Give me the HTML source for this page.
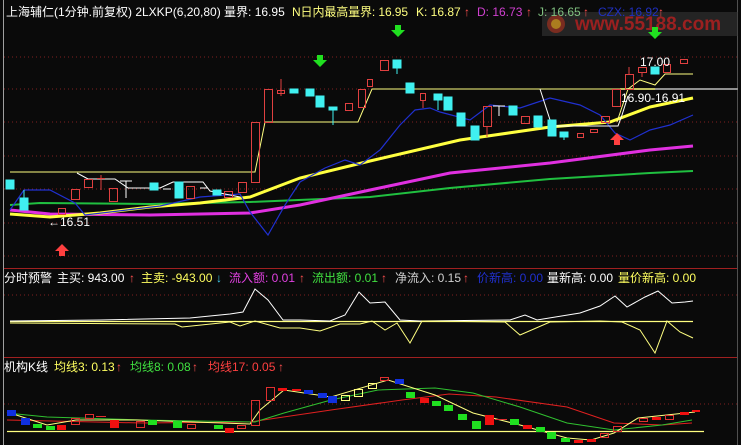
<!DOCTYPE html>
<html><head><meta charset="utf-8"><style>
html,body{margin:0;padding:0;background:#0a0a0a;width:741px;height:445px;overflow:hidden}
svg{display:block}
text{font-family:"Liberation Sans","Noto Sans CJK SC",sans-serif;font-size:12px}
</style></head><body>
<svg width="741" height="445" viewBox="0 0 741 445" xmlns="http://www.w3.org/2000/svg">
<rect width="741" height="445" fill="#0a0a0a"/>
<line x1="3.5" y1="0" x2="3.5" y2="445" stroke="#a0a0a0"/>
<line x1="737.5" y1="0" x2="737.5" y2="445" stroke="#505050"/>
<g stroke="#802020" stroke-dasharray="1,3">
<line x1="4" y1="57" x2="737" y2="57"/><line x1="4" y1="89" x2="737" y2="89"/>
<line x1="4" y1="122" x2="737" y2="122"/><line x1="4" y1="156" x2="737" y2="156"/>
<line x1="4" y1="189" x2="737" y2="189"/><line x1="4" y1="223" x2="737" y2="223"/>
<line x1="4" y1="256" x2="737" y2="256"/><line x1="4" y1="295" x2="737" y2="295"/>
<line x1="4" y1="404" x2="737" y2="404"/>
</g>
<line x1="4" y1="268.5" x2="737" y2="268.5" stroke="#a02020"/>
<line x1="4" y1="357.5" x2="737" y2="357.5" stroke="#a02020"/>

<rect x="542" y="12" width="196" height="24" fill="#3a3a3a" opacity="0.55"/>
<circle cx="556" cy="24" r="9" fill="#a03020" opacity="0.7"/>
<circle cx="556" cy="24" r="5" fill="#c0a020" opacity="0.7"/>
<text x="575" y="30" fill="#b02020" style="font-size:19px;font-weight:bold" opacity="0.85">www.55188.com</text>

<text x="6" y="16" fill="#ffffff">上海辅仁(1分钟.前复权) 2LXKP(6,20,80)  量界: 16.95</text>
<text x="292" y="16" fill="#ffff80" textLength="116">N日内最高量界: 16.95</text>
<text x="416" y="16" fill="#ffff80">K: 16.87</text><text x="464" y="16" fill="#ff5050">↑</text>
<text x="477" y="16" fill="#d040d0">D: 16.73</text><text x="526" y="16" fill="#ff5050">↑</text>
<text x="538" y="16" fill="#80c080">J: 16.65</text><text x="583" y="16" fill="#ff5050">↑</text>
<text x="598" y="16" fill="#2030c0">CZX: 16.92</text><text x="658" y="16" fill="#ff5050">↑</text>

<polyline fill="none" stroke="#20c040" stroke-width="2" points="10,205 40,203 150,204 250,202 370,197 450,188 550,179 650,173 693,171"/>
<polyline fill="none" stroke="#e030e0" stroke-width="3" points="10,210 50,214 150,215 250,213 300,205 370,190 450,173 550,163 650,150 693,146"/>
<polyline fill="none" stroke="#ffff40" stroke-width="3" points="10,214 50,217 100,213 150,207 200,203 250,197 300,178 370,161 460,140 550,127 610,122 650,107 693,98"/>
<polyline fill="none" stroke="#2030d0" stroke-width="1.2" points="10,210 24,190 50,190 75,203 85,215 160,206 200,197 240,194 250,212 268,235 285,205 300,182 325,168 345,160 360,165 380,150 400,125 415,110 430,108 440,112 470,120 490,105 520,108 550,98 580,105 600,115 615,133 630,140 650,130 670,125 693,115"/>
<polyline fill="none" stroke="#ffff80" stroke-width="1" points="10,172 255,172 265,122 330,122 358,122 372,89 620,89"/>
<line x1="620" y1="89" x2="655" y2="89" stroke="#c0c060" stroke-width="2"/>
<line x1="655" y1="89" x2="738" y2="89" stroke="#909090" stroke-width="2"/>
<polyline fill="none" stroke="#ffff80" points="617,122 628,89 640,80 655,85 665,74 693,74"/>
<polyline fill="none" stroke="#ffffff" points="77,173 88,179 115,179 128,188 160,188 173,182 203,182 210,191 240,197"/>
<polyline fill="none" stroke="#ffffff" points="540,89 552,126 618,126 622,115 628,96"/>
<line x1="200" y1="188" x2="208" y2="188" stroke="#fff"/>
<line x1="163" y1="189" x2="171" y2="189" stroke="#fff"/>
<line x1="493" y1="106" x2="505" y2="106" stroke="#fff"/><line x1="499" y1="106" x2="499" y2="116" stroke="#fff"/>
<line x1="120" y1="181" x2="132" y2="181" stroke="#fff"/><line x1="126" y1="181" x2="126" y2="198" stroke="#fff"/>

<g fill="#40f0f0" stroke="#40f0f0">
<rect x="6" y="180" width="8" height="9"/><rect x="20" y="198" width="8" height="12"/><line x1="24" y1="190" x2="24" y2="198"/>
<rect x="150" y="183" width="8" height="7"/><rect x="175" y="182" width="8" height="16"/><rect x="213" y="190" width="8" height="5"/>
<rect x="290" y="89" width="8" height="4"/><rect x="306" y="89" width="8" height="7"/><rect x="316" y="96" width="8" height="11"/>
<rect x="329" y="107" width="8" height="3"/><line x1="333" y1="110" x2="333" y2="125"/>
<rect x="393" y="60" width="8" height="8"/><line x1="397" y1="68" x2="397" y2="74"/>
<rect x="406" y="83" width="8" height="10"/><rect x="434" y="94" width="8" height="6"/><line x1="438" y1="100" x2="438" y2="110"/>
<rect x="444" y="97" width="8" height="13"/><rect x="457" y="113" width="8" height="13"/><rect x="471" y="126" width="8" height="14"/>
<rect x="509" y="106" width="8" height="9"/><rect x="534" y="116" width="8" height="11"/><rect x="548" y="120" width="8" height="16"/>
<rect x="560" y="132" width="8" height="5"/><line x1="564" y1="137" x2="564" y2="140"/><rect x="651" y="67" width="8" height="7"/>
</g>
<g fill="none" stroke="#e04040">
<rect x="58.5" y="208.5" width="7" height="6"/><rect x="71.5" y="189.5" width="8" height="10"/><rect x="84.5" y="179.5" width="8" height="8"/>
<line x1="97" y1="178.5" x2="105" y2="178.5"/><line x1="101" y1="175" x2="101" y2="190"/>
<rect x="109.5" y="188.5" width="8" height="13"/><rect x="186.5" y="186.5" width="8" height="12"/><rect x="224.5" y="191.5" width="8" height="6"/>
<rect x="238.5" y="182.5" width="8" height="10"/><rect x="251.5" y="122.5" width="8" height="60"/><rect x="264.5" y="89.5" width="8" height="33"/>
<rect x="277.5" y="90.5" width="7" height="3"/><line x1="281" y1="79" x2="281" y2="96"/>
<rect x="345.5" y="103.5" width="7" height="7"/><rect x="358.5" y="89.5" width="7" height="18"/><rect x="367.5" y="79.5" width="5" height="7"/>
<rect x="380.5" y="60.5" width="8" height="10"/><rect x="420.5" y="93.5" width="5" height="7"/><line x1="423" y1="100" x2="423" y2="108"/>
<rect x="483.5" y="106.5" width="8" height="20"/><line x1="487" y1="126" x2="487" y2="137"/>
<rect x="521.5" y="116.5" width="8" height="7"/><rect x="577.5" y="133.5" width="6" height="4"/>
<rect x="590.5" y="129.5" width="7" height="3"/><rect x="601.5" y="116.5" width="8" height="6"/>
<rect x="612.5" y="89.5" width="8" height="17"/><rect x="625.5" y="74.5" width="8" height="15"/><line x1="629" y1="67" x2="629" y2="74"/>
<rect x="638.5" y="67.5" width="8" height="5"/><line x1="642" y1="72" x2="642" y2="77"/>
<rect x="663.5" y="64.5" width="7" height="8"/><rect x="680.5" y="59.5" width="7" height="4"/>
</g>
<text x="640" y="66" fill="#ffffff">17.00</text>
<text x="621" y="102" fill="#ffffff">16.90-16.91</text>
<text x="48" y="226" fill="#ffffff">←16.51</text>
<g fill="#20e020"><path d="M317,55h6v5h4l-7,7l-7,-7h4z"/><path d="M395,25h6v5h4l-7,7l-7,-7h4z"/><path d="M652,27h6v5h4l-7,7l-7,-7h4z"/></g>
<g fill="#ff4040"><path d="M59,256h6v-5h4l-7,-7l-7,7h4z"/><path d="M614,145h6v-5h4l-7,-7l-7,7h4z"/></g>

<text x="4" y="282" fill="#ffffff">分时预警</text>
<text x="57" y="282" fill="#ffffff">主买: 943.00</text><text x="129" y="282" fill="#ff5050">↑</text>
<text x="141" y="282" fill="#ffff60">主卖: -943.00</text><text x="216" y="282" fill="#40d0f0">↓</text>
<text x="229" y="282" fill="#e040e0">流入额: 0.01</text><text x="299" y="282" fill="#ff5050">↑</text>
<text x="312" y="282" fill="#40e040">流出额: 0.01</text><text x="381" y="282" fill="#ff5050">↑</text>
<text x="395" y="282" fill="#d0d0d0">净流入: 0.15</text><text x="463" y="282" fill="#ff5050">↑</text>
<text x="477" y="282" fill="#2030d0">价新高: 0.00</text>
<text x="547" y="282" fill="#ffffff">量新高: 0.00</text>
<text x="618" y="282" fill="#ffff60">量价新高: 0.00</text>
<line x1="10" y1="321.5" x2="693" y2="321.5" stroke="#ffff80" stroke-width="1.3"/>
<polyline fill="none" stroke="#ffffff" points="10,321 100,320 190,318 230,314 243,312 255,289 268,300 283,320 300,320 330,321 345,315 359,292 370,303 385,302 400,320 420,321 510,320 525,315 537,320 580,313 600,306 615,296 627,307 645,297 658,291 672,303 685,302 693,301"/>
<polyline fill="none" stroke="#ffff80" points="10,323 175,324 182,327 230,322 240,326 255,321 280,328 300,328 320,331 340,324 360,324 372,321 385,330 397,323 410,343 422,321 505,322 520,335 550,322 600,321 622,322 640,330 655,353 667,321 680,332 693,338"/>

<text x="4" y="371" fill="#ffffff">机构K线</text>
<text x="54" y="371" fill="#ffff60">均线3: 0.13</text><text x="116" y="371" fill="#ff5050">↑</text>
<text x="130" y="371" fill="#40e040">均线8: 0.08</text><text x="192" y="371" fill="#ff5050">↑</text>
<text x="208" y="371" fill="#ff4040">均线17: 0.05</text><text x="278" y="371" fill="#ff5050">↑</text>
<line x1="7" y1="431.5" x2="704" y2="431.5" stroke="#ffff80" stroke-width="1.3"/>
<polyline fill="none" stroke="#e02020" points="7,420 142,423 250,422 331,410 402,400 449,394 496,397 567,407 614,423 662,425 692,423"/>
<polyline fill="none" stroke="#30c030" points="7,413 47,417 142,420 255,422 284,413 331,400 378,390 435,388 473,393 520,407 567,423 614,430 662,425 692,420"/>
<polyline fill="none" stroke="#ffff80" points="7,412 47,425 76,420 137,420 250,424 260,410 284,390 331,397 388,380 435,395 473,413 520,425 567,438 591,440 614,433 638,418 695,412"/>
<g fill="#1030e0"><rect x="7" y="410" width="9" height="6"/><rect x="21" y="418" width="9" height="7"/><rect x="304" y="390" width="9" height="4"/><rect x="318" y="393" width="9" height="5"/><rect x="328" y="396" width="9" height="7"/><rect x="395" y="379" width="9" height="5"/></g>
<g fill="#20e020"><rect x="33" y="424" width="9" height="4"/><rect x="46" y="426" width="9" height="4"/><rect x="148" y="420" width="9" height="5"/><rect x="173" y="421" width="9" height="7"/><rect x="214" y="425" width="9" height="4"/><rect x="406" y="392" width="9" height="6"/><rect x="432" y="401" width="9" height="5"/><rect x="444" y="405" width="9" height="6"/><rect x="458" y="414" width="9" height="6"/><rect x="472" y="421" width="9" height="8"/><rect x="510" y="419" width="9" height="6"/><rect x="536" y="427" width="9" height="5"/><rect x="547" y="432" width="9" height="7"/><rect x="561" y="438" width="9" height="4"/></g>
<g fill="#f01010"><rect x="57" y="425" width="9" height="5"/><rect x="110" y="420" width="9" height="8"/><rect x="225" y="428" width="9" height="5"/><rect x="278" y="388" width="9" height="3"/><rect x="292" y="389" width="9" height="2"/><rect x="420" y="398" width="9" height="5"/><rect x="485" y="415" width="9" height="10"/><rect x="523" y="425" width="9" height="4"/><rect x="574" y="440" width="9" height="3"/><rect x="587" y="439" width="9" height="3"/><rect x="652" y="417" width="9" height="3"/><rect x="680" y="412" width="9" height="3"/><rect x="692" y="410" width="8" height="2"/></g>
<g fill="none" stroke="#e03030"><rect x="71.5" y="418.5" width="8" height="6"/><rect x="85.5" y="414.5" width="8" height="4"/><line x1="96" y1="416.5" x2="106" y2="416.5"/><rect x="136.5" y="421.5" width="8" height="6"/><rect x="187.5" y="424.5" width="8" height="4"/><rect x="237.5" y="425.5" width="8" height="3"/><rect x="251.5" y="400.5" width="8" height="25"/><rect x="266.5" y="387.5" width="8" height="13"/><rect x="380.5" y="377.5" width="8" height="3"/><line x1="495" y1="419.5" x2="507" y2="419.5"/><rect x="600.5" y="433.5" width="8" height="4"/><rect x="613.5" y="426.5" width="8" height="5"/><rect x="639.5" y="418.5" width="8" height="3"/><rect x="665.5" y="415.5" width="8" height="4"/></g>
<g fill="none" stroke="#ffff80"><rect x="341.5" y="395.5" width="8" height="5"/><rect x="354.5" y="389.5" width="8" height="7"/><rect x="368.5" y="383.5" width="8" height="5"/></g>
</svg>
</body></html>
